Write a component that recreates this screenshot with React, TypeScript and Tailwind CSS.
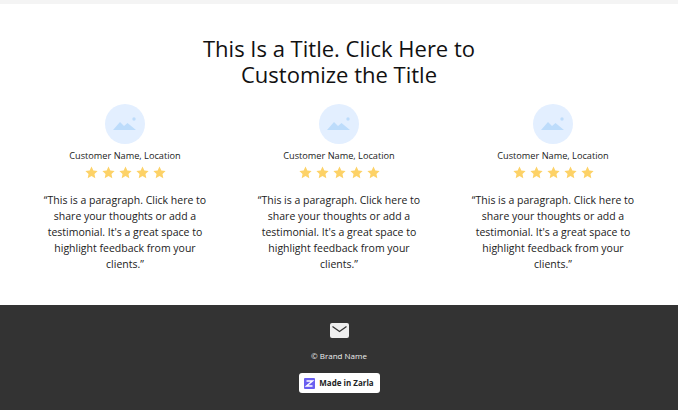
import React from 'react'

const font = { fontFamily: '"Open Sans", sans-serif' }

function PlaceholderImage() {
  return (
    <div className="w-10 h-10 rounded-full bg-[#e3efff] flex items-center justify-center">
      <svg width="24" height="14" viewBox="0 0 24 14">
        <path d="M0 13 L7 5 L11 9 L14.5 6 L23 13 Z" fill="#bddcfb" />
        <circle cx="21" cy="2" r="1.7" fill="#bddcfb" />
      </svg>
    </div>
  )
}

function Star() {
  return (
    <svg width="13" height="13" viewBox="0 0 24 24">
      <path
        d="M12 1 L15.4 8.2 L23.3 9.2 L17.5 14.6 L19 22.5 L12 18.6 L5 22.5 L6.5 14.6 L0.7 9.2 L8.6 8.2 Z"
        fill="#fdd267"
      />
    </svg>
  )
}

function Testimonial() {
  return (
    <div className="w-[214px] flex flex-col items-center">
      <PlaceholderImage />
      <p className="mt-[3px] text-[9.2px] leading-[18px] text-[#222]">Customer Name, Location</p>
      <div className="flex gap-[4px] h-[14px] items-center">
        <Star />
        <Star />
        <Star />
        <Star />
        <Star />
      </div>
      <p className="mt-[13px] w-[170px] text-center text-[10.5px] leading-[16px] text-[#222]">
        “This is a paragraph. Click here to share your thoughts or add a testimonial. It's a great space to highlight feedback from your clients.”
      </p>
    </div>
  )
}

export default function App() {
  return (
    <div className="w-[678px] h-[410px] overflow-hidden bg-white flex flex-col" style={font}>
      <div className="h-1 bg-[#f4f4f4]" />
      <section className="h-[301px] flex flex-col items-center pt-[31px]">
        <h1 className="w-[320px] text-center text-[22px] leading-[26px] text-[#111]">
          This Is a Title. Click Here to Customize the Title
        </h1>
        <div className="mt-[17px] flex justify-center">
          <Testimonial />
          <Testimonial />
          <Testimonial />
        </div>
      </section>
      <footer className="flex-1 bg-[#333333] flex flex-col items-center pt-[18px]">
        <svg width="19" height="15" viewBox="0 0 19 15">
          <rect width="19" height="15" rx="2" fill="#eeeeee" />
          <path d="M2.5 3.5 L9.5 8.5 L16.5 3.5" fill="none" stroke="#333333" strokeWidth="1.3" />
        </svg>
        <p className="mt-[12px] text-[8px] leading-[12px] text-[#eeeeee]">© Brand Name</p>
        <div className="mt-[11px] w-[81px] h-[20px] rounded-[3px] bg-white flex items-center justify-center gap-[4px]">
          <svg width="11" height="11" viewBox="0 0 11 11">
            <rect width="11" height="11" rx="1" fill="#6a5ff0" />
            <path d="M2.5 3 H8.5 L2.5 8 H8.5" fill="none" stroke="#ffffff" strokeWidth="1.4" />
          </svg>
          <span className="text-[8px] font-bold leading-[12px] text-[#222]">Made in Zarla</span>
        </div>
      </footer>
    </div>
  )
}
